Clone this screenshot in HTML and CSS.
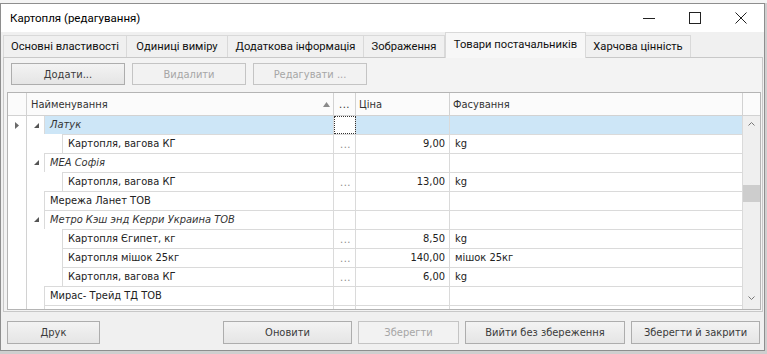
FILE: index.html
```html
<!DOCTYPE html>
<html lang="uk">
<head>
  <meta charset="UTF-8" />
  <title>Картопля (редагування)</title>
  <link rel="stylesheet" href="styles.css">
</head>
<body>
<div class="screen">
  <div class="backdrop"></div>
  <div class="window">
    <div class="titlebar">
      <span class="title">Картопля (редагування)</span>
      <div class="winbtn"><svg width="12" height="12" viewBox="0 0 12 12"><line x1="0" y1="6.5" x2="12" y2="6.5" stroke="#222" stroke-width="1"/></svg></div>
      <div class="winbtn"><svg width="12" height="12" viewBox="0 0 12 12"><rect x="0.5" y="0.5" width="11" height="11" fill="none" stroke="#222" stroke-width="1"/></svg></div>
      <div class="winbtn"><svg width="12" height="12" viewBox="0 0 12 12"><path d="M0.5 0.5 L11.5 11.5 M11.5 0.5 L0.5 11.5" stroke="#222" stroke-width="1"/></svg></div>
    </div>

    <div class="tabs">
      <div class="tab t1">Основні властивості</div>
      <div class="tab t2">Одиниці виміру</div>
      <div class="tab t3">Додаткова інформація</div>
      <div class="tab t4">Зображення</div>
      <div class="tab t5 active">Товари постачальників</div>
      <div class="tab t6">Харчова цінність</div>
    </div>

    <div class="panel">
      <div class="toolbar">
        <button class="btn tb">Додати...</button>
        <button class="btn tb" disabled>Видалити</button>
        <button class="btn tb" disabled>Редагувати ...</button>
      </div>

      <div class="grid">
        <div class="grid-head">
          <div class="ind"></div>
          <div class="h-name">Найменування
            <svg class="sort" width="7" height="5" viewBox="0 0 7 5"><polygon points="3.5,0 7,5 0,5" fill="#8a8a8a"/></svg>
          </div>
          <div class="h-dots">...</div>
          <div class="h-price">Ціна</div>
          <div class="h-pack">Фасування</div>
          <div class="h-fill"></div>
        </div>

        <div class="grid-main">
          <div class="rows">
            <div class="row selected">
              <div class="ind"><svg width="4" height="7" viewBox="0 0 4 7"><polygon points="0,0 4,3.5 0,7" fill="#6a6a6a"/></svg></div>
              <div class="name-col">
                <div class="tree lvl0"><svg width="5" height="5" viewBox="0 0 5 5"><polygon points="5,0 5,5 0,5" fill="#555"/></svg></div>
                <div class="c-name group">Латук</div>
              </div>
              <div class="c-dots focus"></div>
              <div class="c-price"></div>
              <div class="c-pack"></div>
            </div>
            <div class="row">
              <div class="ind"></div>
              <div class="name-col">
                <div class="tree lvl1"></div>
                <div class="c-name">Картопля, вагова КГ</div>
              </div>
              <div class="c-dots">...</div>
              <div class="c-price">9,00</div>
              <div class="c-pack">kg</div>
            </div>
            <div class="row">
              <div class="ind"></div>
              <div class="name-col">
                <div class="tree lvl0"><svg width="5" height="5" viewBox="0 0 5 5"><polygon points="5,0 5,5 0,5" fill="#555"/></svg></div>
                <div class="c-name group">МЕА Софія</div>
              </div>
              <div class="c-dots"></div>
              <div class="c-price"></div>
              <div class="c-pack"></div>
            </div>
            <div class="row">
              <div class="ind"></div>
              <div class="name-col">
                <div class="tree lvl1"></div>
                <div class="c-name">Картопля, вагова КГ</div>
              </div>
              <div class="c-dots">...</div>
              <div class="c-price">13,00</div>
              <div class="c-pack">kg</div>
            </div>
            <div class="row">
              <div class="ind"></div>
              <div class="name-col">
                <div class="tree lvl0"></div>
                <div class="c-name">Мережа Ланет ТОВ</div>
              </div>
              <div class="c-dots"></div>
              <div class="c-price"></div>
              <div class="c-pack"></div>
            </div>
            <div class="row">
              <div class="ind"></div>
              <div class="name-col">
                <div class="tree lvl0"><svg width="5" height="5" viewBox="0 0 5 5"><polygon points="5,0 5,5 0,5" fill="#555"/></svg></div>
                <div class="c-name group">Метро Кэш энд Керри Украина ТОВ</div>
              </div>
              <div class="c-dots"></div>
              <div class="c-price"></div>
              <div class="c-pack"></div>
            </div>
            <div class="row">
              <div class="ind"></div>
              <div class="name-col">
                <div class="tree lvl1"></div>
                <div class="c-name">Картопля Єгипет, кг</div>
              </div>
              <div class="c-dots">...</div>
              <div class="c-price">8,50</div>
              <div class="c-pack">kg</div>
            </div>
            <div class="row">
              <div class="ind"></div>
              <div class="name-col">
                <div class="tree lvl1"></div>
                <div class="c-name">Картопля мішок 25кг</div>
              </div>
              <div class="c-dots">...</div>
              <div class="c-price">140,00</div>
              <div class="c-pack">мішок 25кг</div>
            </div>
            <div class="row">
              <div class="ind"></div>
              <div class="name-col">
                <div class="tree lvl1"></div>
                <div class="c-name">Картопля, вагова КГ</div>
              </div>
              <div class="c-dots">...</div>
              <div class="c-price">6,00</div>
              <div class="c-pack">kg</div>
            </div>
            <div class="row">
              <div class="ind"></div>
              <div class="name-col">
                <div class="tree lvl0"></div>
                <div class="c-name">Мирас- Трейд ТД ТОВ</div>
              </div>
              <div class="c-dots"></div>
              <div class="c-price"></div>
              <div class="c-pack"></div>
            </div>
            <div class="row">
              <div class="ind"></div>
              <div class="name-col">
                <div class="tree lvl0"></div>
                <div class="c-name"></div>
              </div>
              <div class="c-dots"></div>
              <div class="c-price"></div>
              <div class="c-pack"></div>
            </div>
          </div>

          <div class="vscroll">
            <svg class="chev" width="7" height="4" viewBox="0 0 7 4"><polyline points="0.5,3.5 3.5,0.5 6.5,3.5" fill="none" stroke="#777" stroke-width="1"/></svg>
            <div class="thumb"></div>
            <svg class="chev down" width="7" height="4" viewBox="0 0 7 4"><polyline points="0.5,0.5 3.5,3.5 6.5,0.5" fill="none" stroke="#777" stroke-width="1"/></svg>
          </div>
        </div>
      </div>
    </div>

    <div class="footer">
      <button class="btn print">Друк</button>
      <button class="btn refresh">Оновити</button>
      <button class="btn save" disabled>Зберегти</button>
      <button class="btn quit">Вийти без збереження</button>
      <button class="btn saveclose">Зберегти й закрити</button>
    </div>
  </div>
</div>
</body>
</html>
```
FILE: styles.css
```css
body {
  margin: 0;
  background: #c9c9c9;
  font-family: "DejaVu Sans Condensed", "Liberation Sans", sans-serif;
  font-size: 11px;
  color: #333;
}
.screen {
  width: 767px;
  height: 354px;
  overflow: hidden;
  background: #cfcfcf;
}
.backdrop {
  height: 3px;
  background: #f4f4f4;
}
.window {
  width: 765px;
  height: 348px;
  box-sizing: border-box;
  border: 1px solid #8e8e8e;
  background: #f0f0f0;
  display: flex;
  flex-direction: column;
}

/* title bar */
.titlebar {
  height: 28px;
  background: #fff;
  display: flex;
  align-items: center;
  flex-shrink: 0;
}
.title {
  font-family: Roboto, "Noto Sans", sans-serif;
  font-size: 11.5px;
  color: #000;
  padding-left: 9px;
  margin-right: auto;
}
.winbtn {
  width: 46px;
  height: 28px;
  display: flex;
  align-items: center;
  justify-content: center;
}
.winbtn svg { display: block; }

/* tabs */
.tabs {
  height: 25px;
  display: flex;
  align-items: flex-end;
  padding-left: 2px;
  flex-shrink: 0;
  position: relative;
  z-index: 1;
}
.tab {
  box-sizing: border-box;
  height: 22px;
  border: 1px solid #d9d9d9;
  border-left: none;
  border-bottom: none;
  background: #f0f0f0;
  font-family: Roboto, "Noto Sans", sans-serif;
  font-size: 11.2px;
  color: #111;
  display: flex;
  align-items: center;
  justify-content: center;
}
.t1 { width: 124px; border-left: 1px solid #d9d9d9; }
.t2 { width: 101px; }
.t3 { width: 136px; }
.t4 { width: 81px; }
.t5 { width: 141px; }
.t6 { width: 105px; }
.tab.active {
  height: 26px;
  margin-bottom: -1px;
  border: 1px solid #d9d9d9;
  border-bottom: none;
  background: #f7f7f7;
  padding-bottom: 2px;
}

/* panel */
.panel {
  height: 255px;
  box-sizing: border-box;
  margin: 0 1px 0 2px;
  border: 1px solid #c8c8c8;
  background: #f3f3f3;
  flex-shrink: 0;
}
.toolbar {
  display: flex;
  gap: 7px;
  padding: 5px 0 0 7px;
  height: 34px;
  box-sizing: border-box;
}
.btn {
  box-sizing: border-box;
  height: 22px;
  border: 1px solid #adadad;
  background: linear-gradient(#f3f3f3, #e5e5e5);
  font-family: "DejaVu Sans Condensed", "Liberation Sans", sans-serif;
  font-size: 11px;
  color: #3a3a3a;
  padding: 0;
}
.btn:disabled {
  border-color: #c4c4c4;
  background: #f2f2f2;
  color: #a6a6a6;
}
.tb { width: 114px; }

/* grid */
.grid {
  box-sizing: border-box;
  width: 754px;
  height: 218px;
  margin-left: 3px;
  border: 1px solid #b4b4b4;
  background: #fff;
  overflow: hidden;
}
.grid-head {
  display: flex;
  height: 23px;
  box-sizing: border-box;
  border-bottom: 1px solid #d2d2d2;
  background: #fbfbfb;
  color: #333;
}
.grid-head > div {
  box-sizing: border-box;
  display: flex;
  align-items: center;
  border-right: 1px solid #d2d2d2;
}
.ind {
  width: 19px;
  flex-shrink: 0;
  box-sizing: border-box;
  border-right: 1px solid #d2d2d2;
  display: flex;
  align-items: center;
  justify-content: center;
}
.h-name {
  width: 307px;
  padding-left: 4px;
  position: relative;
}
.sort {
  position: absolute;
  right: 3px;
  top: 9px;
}
.h-dots {
  width: 22px;
  padding-left: 5px;
  letter-spacing: 0.5px;
}
.h-price { width: 94px; padding-left: 3px; }
.h-pack { width: 293px; padding-left: 3px; }
.grid-head > .h-fill { flex: 1; border-right: none; }

.grid-main {
  display: flex;
  height: 193px;
  overflow: hidden;
}
.rows { width: 735px; }
.row {
  display: flex;
  height: 19px;
}
.row:first-child { height: 18px; }
.row > .ind { height: 100%; }
.name-col {
  width: 307px;
  display: flex;
  flex-shrink: 0;
}
.tree {
  flex-shrink: 0;
  display: flex;
  align-items: center;
  justify-content: center;
  background: #fff;
}
.tree.lvl0 { width: 17px; padding-left: 1px; box-sizing: border-box; }
.tree.lvl1 { width: 35px; }
.c-name, .c-dots, .c-price, .c-pack {
  box-sizing: border-box;
  border-top: 1px solid #dadada;
  border-right: 1px solid #dadada;
  white-space: nowrap;
  overflow: hidden;
  line-height: 17px;
}
.row:first-child > div > .c-name,
.row:first-child > .c-dots,
.row:first-child > .c-price,
.row:first-child > .c-pack { border-top: none; }
.c-name {
  flex: 1;
  border-left: 1px solid #dadada;
  padding-left: 5px;
  color: #222;
}
.c-name.group {
  font-style: italic;
  color: #333;
}
.c-dots {
  width: 22px;
  color: #8a8a8a;
  padding-left: 6px;
  line-height: 19px;
  letter-spacing: 0.5px;
}
.c-price {
  width: 94px;
  text-align: right;
  padding-right: 4px;
  color: #222;
}
.c-pack {
  width: 293px;
  padding-left: 5px;
  color: #222;
}
.selected .c-name,
.selected .c-price,
.selected .c-pack {
  background: #cde6f7;
}
.c-dots.focus {
  outline: 1px dotted #333;
  outline-offset: -1px;
  background: #fff;
}

.vscroll {
  width: 17px;
  background: #efefef;
  position: relative;
}
.chev {
  position: absolute;
  left: 5px;
  top: 6px;
}
.chev.down {
  top: auto;
  bottom: 9px;
}
.thumb {
  position: absolute;
  left: 0;
  right: 0;
  top: 69px;
  height: 17px;
  background: #cdcdcd;
}

/* footer */
.footer {
  display: flex;
  gap: 6px;
  padding: 9px 4px 0 6px;
}
.footer .btn { height: 23px; }
.print { width: 93px; }
.refresh { width: 129px; margin-left: auto; }
.save { width: 101px; }
.quit { width: 160px; }
.saveclose { width: 129px; }
```
